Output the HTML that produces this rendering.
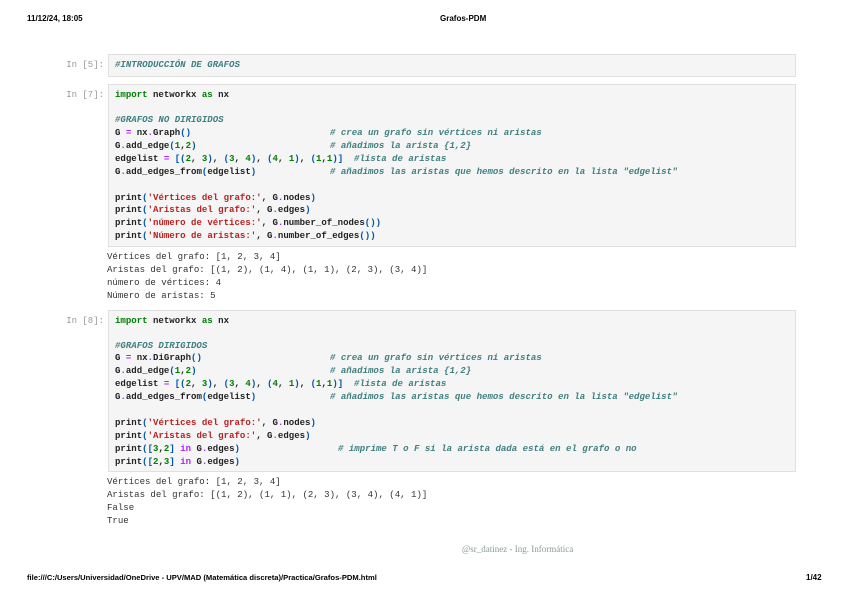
<!DOCTYPE html>
<html><head><meta charset="utf-8"><style>
body{margin:0;width:848px;height:599px;background:#fff;position:relative;overflow:hidden;font-family:"Liberation Sans",sans-serif}
.a{position:absolute;white-space:pre;line-height:12px}
.hd{font-size:8px;color:#000;font-weight:bold}
.box{position:absolute;left:108px;width:686px;background:#f5f5f5;border:1px solid #e0e0e0}
.p{font-family:"Liberation Mono",monospace;font-size:9px;color:#999;right:744px;text-align:right}
.c{font-family:"Liberation Mono",monospace;font-size:9.05px;font-weight:bold;color:#222;left:115px}
.o{font-family:"Liberation Mono",monospace;font-size:9.05px;color:#333;left:107px}
.k{color:#008000}.op{color:#aa22ff}.n{color:#008000}.s{color:#ba2121}.b{color:#0055aa}
.cm{color:#408080;font-style:italic;font-weight:bold}
</style></head><body>
<div class="a hd" style="left:27px;top:13px">11/12/24, 18:05</div>
<div class="a hd" style="left:440px;top:13px">Grafos-PDM</div>
<div class="a hd" style="left:27px;top:572px;font-size:7.6px">file:///C:/Users/Universidad/OneDrive - UPV/MAD (Matemática discreta)/Practica/Grafos-PDM.html</div>
<div class="a hd" style="left:806px;top:572px">1/42</div>
<div class="a" style="left:462px;top:543px;font-family:'Liberation Serif',serif;font-size:9px;color:#8a9a9a">@sr_datinez - Ing. Informática</div>

<div class="box" style="top:54px;height:21px"></div>
<div class="box" style="top:84px;height:161px"></div>
<div class="box" style="top:310px;height:160px"></div>

<div class="a p" style="top:59px">In [5]:</div>
<div class="a c cm" style="top:59px">#INTRODUCCIÓN DE GRAFOS</div>

<div class="a p" style="top:89px">In [7]:</div>
<div class="a c" style="top:89px"><span class="k">import</span> networkx <span class="k">as</span> nx</div>
<div class="a c cm" style="top:114px">#GRAFOS NO DIRIGIDOS</div>
<div class="a c" style="top:127px">G <span class="op">=</span> nx<span class="op">.</span>Graph<span class="b">()</span></div>
<div class="a c" style="top:140px">G<span class="op">.</span>add_edge<span class="b">(</span><span class="n">1</span>,<span class="n">2</span><span class="b">)</span></div>
<div class="a c" style="top:153px">edgelist <span class="op">=</span> <span class="b">[(</span><span class="n">2</span>, <span class="n">3</span><span class="b">)</span>, <span class="b">(</span><span class="n">3</span>, <span class="n">4</span><span class="b">)</span>, <span class="b">(</span><span class="n">4</span>, <span class="n">1</span><span class="b">)</span>, <span class="b">(</span><span class="n">1</span>,<span class="n">1</span><span class="b">)]</span>  <span class="cm">#lista de aristas</span></div>
<div class="a c" style="top:166px">G<span class="op">.</span>add_edges_from<span class="b">(</span>edgelist<span class="b">)</span></div>
<div class="a c cm" style="top:127px;left:330px"># crea un grafo sin vértices ni aristas</div>
<div class="a c cm" style="top:140px;left:330px"># añadimos la arista {1,2}</div>
<div class="a c cm" style="top:166px;left:330px"># añadimos las aristas que hemos descrito en la lista "edgelist"</div>
<div class="a c" style="top:192px">print<span class="b">(</span><span class="s">'Vértices del grafo:'</span>, G<span class="op">.</span>nodes<span class="b">)</span></div>
<div class="a c" style="top:204px">print<span class="b">(</span><span class="s">'Aristas del grafo:'</span>, G<span class="op">.</span>edges<span class="b">)</span></div>
<div class="a c" style="top:217px">print<span class="b">(</span><span class="s">'número de vértices:'</span>, G<span class="op">.</span>number_of_nodes<span class="b">())</span></div>
<div class="a c" style="top:230px">print<span class="b">(</span><span class="s">'Número de aristas:'</span>, G<span class="op">.</span>number_of_edges<span class="b">())</span></div>

<div class="a o" style="top:251px">Vértices del grafo: [1, 2, 3, 4]</div>
<div class="a o" style="top:264px">Aristas del grafo: [(1, 2), (1, 4), (1, 1), (2, 3), (3, 4)]</div>
<div class="a o" style="top:277px">número de vértices: 4</div>
<div class="a o" style="top:290px">Número de aristas: 5</div>

<div class="a p" style="top:315px">In [8]:</div>
<div class="a c" style="top:315px"><span class="k">import</span> networkx <span class="k">as</span> nx</div>
<div class="a c cm" style="top:340px">#GRAFOS DIRIGIDOS</div>
<div class="a c" style="top:352px">G <span class="op">=</span> nx<span class="op">.</span>DiGraph<span class="b">()</span></div>
<div class="a c" style="top:365px">G<span class="op">.</span>add_edge<span class="b">(</span><span class="n">1</span>,<span class="n">2</span><span class="b">)</span></div>
<div class="a c" style="top:378px">edgelist <span class="op">=</span> <span class="b">[(</span><span class="n">2</span>, <span class="n">3</span><span class="b">)</span>, <span class="b">(</span><span class="n">3</span>, <span class="n">4</span><span class="b">)</span>, <span class="b">(</span><span class="n">4</span>, <span class="n">1</span><span class="b">)</span>, <span class="b">(</span><span class="n">1</span>,<span class="n">1</span><span class="b">)]</span>  <span class="cm">#lista de aristas</span></div>
<div class="a c" style="top:391px">G<span class="op">.</span>add_edges_from<span class="b">(</span>edgelist<span class="b">)</span></div>
<div class="a c cm" style="top:352px;left:330px"># crea un grafo sin vértices ni aristas</div>
<div class="a c cm" style="top:365px;left:330px"># añadimos la arista {1,2}</div>
<div class="a c cm" style="top:391px;left:330px"># añadimos las aristas que hemos descrito en la lista "edgelist"</div>
<div class="a c" style="top:417px">print<span class="b">(</span><span class="s">'Vértices del grafo:'</span>, G<span class="op">.</span>nodes<span class="b">)</span></div>
<div class="a c" style="top:430px">print<span class="b">(</span><span class="s">'Aristas del grafo:'</span>, G<span class="op">.</span>edges<span class="b">)</span></div>
<div class="a c" style="top:443px">print<span class="b">([</span><span class="n">3</span>,<span class="n">2</span><span class="b">]</span> <span class="op">in</span> G<span class="op">.</span>edges<span class="b">)</span></div>
<div class="a c" style="top:456px">print<span class="b">([</span><span class="n">2</span>,<span class="n">3</span><span class="b">]</span> <span class="op">in</span> G<span class="op">.</span>edges<span class="b">)</span></div>
<div class="a c cm" style="top:443px;left:338px"># imprime T o F si la arista dada está en el grafo o no</div>

<div class="a o" style="top:476px">Vértices del grafo: [1, 2, 3, 4]</div>
<div class="a o" style="top:489px">Aristas del grafo: [(1, 2), (1, 1), (2, 3), (3, 4), (4, 1)]</div>
<div class="a o" style="top:502px">False</div>
<div class="a o" style="top:515px">True</div>
</body></html>
